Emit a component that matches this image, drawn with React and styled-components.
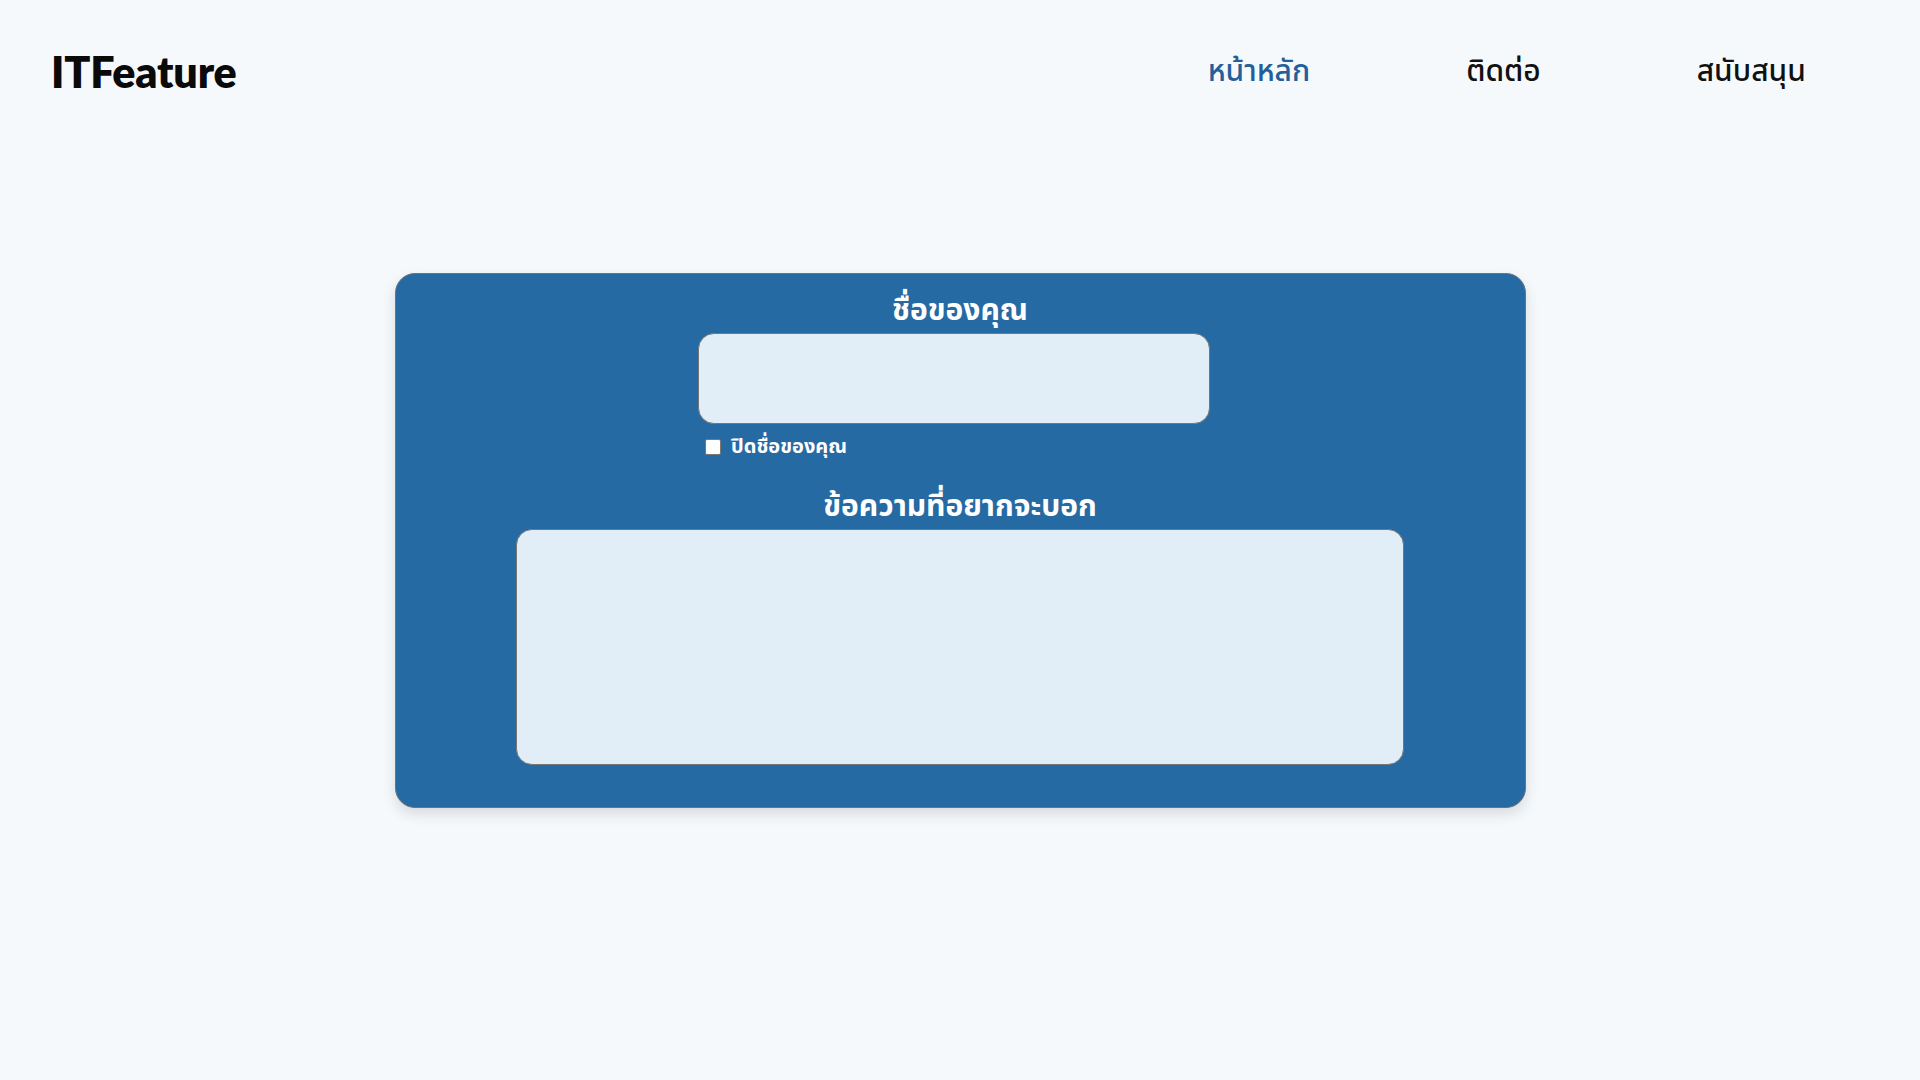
import styled, { createGlobalStyle } from "styled-components";

const GlobalStyle = createGlobalStyle`
  html, body {
    margin: 0;
    padding: 0;
    background-color: #f6f9fc;
    font-family: "Noto Sans Thai", "Noto Sans Thai UI", "Noto Sans", "Liberation Sans", sans-serif;
  }
`;

const Page = styled.div`
  width: 100%;
  min-height: 100vh;
  background-color: #f6f9fc;
`;

const Header = styled.div`
  display: flex;
  align-items: center;
  justify-content: space-between;
  height: 142px;
  padding: 0 114px 0 51px;
  box-sizing: border-box;
`;

const Logo = styled.div`
  font-family: "Lato", "Inter", sans-serif;
  font-weight: 800;
  font-size: 43px;
  color: #0a0a0a;
  letter-spacing: -0.2px;
`;

const Nav = styled.div`
  display: flex;
  gap: 156px;
  align-items: center;
  margin-top: 2px;
`;

const NavItem = styled.a`
  font-size: 30px;
  font-weight: 500;
  color: ${(p) => (p.$active ? "#245f99" : "#111")};
  text-decoration: none;
  cursor: pointer;
`;

const Main = styled.div`
  display: flex;
  justify-content: center;
  padding-top: 131px;
`;

const Card = styled.form`
  width: 1131px;
  box-sizing: border-box;
  background-color: #256aa3;
  border: 1px solid #6b7480;
  border-radius: 20px;
  box-shadow: 0 6px 14px rgba(0, 0, 0, 0.12);
  padding: 15px 0 42px;
  display: flex;
  flex-direction: column;
  align-items: center;
`;

const Label = styled.div`
  color: white;
  font-size: 30px;
  font-weight: 700;
  line-height: 44px;
`;

const NameBox = styled.div`
  display: flex;
  flex-direction: column;
  margin-left: -12px;
  margin-top: 0;
`;

const NameInput = styled.input`
  width: 512px;
  height: 91px;
  box-sizing: border-box;
  background-color: #e1eef8;
  border: 1px solid #777;
  border-radius: 16px;
  outline: none;
`;

const CheckRow = styled.label`
  display: flex;
  align-items: center;
  gap: 10px;
  margin: 8px 0 0 7px;
  color: white;
  font-size: 20px;
  font-weight: 700;
`;

const Check = styled.input`
  width: 16px;
  height: 16px;
  margin: 0;
  appearance: none;
  background: white;
  border: 1px solid #777;
  border-radius: 2px;
`;

const MessageLabel = styled(Label)`
  margin-top: 23px;
`;

const MessageInput = styled.textarea`
  width: 888px;
  height: 236px;
  box-sizing: border-box;
  background-color: #e1eef8;
  border: 1px solid #777;
  border-radius: 16px;
  resize: none;
  outline: none;
  margin-top: 0;
`;

function App() {
  return (
    <Page>
      <GlobalStyle />
      <Header>
        <Logo>ITFeature</Logo>
        <Nav>
          <NavItem $active>หน้าหลัก</NavItem>
          <NavItem>ติดต่อ</NavItem>
          <NavItem>สนับสนุน</NavItem>
        </Nav>
      </Header>
      <Main>
        <Card>
          <Label>ชื่อของคุณ</Label>
          <NameBox>
            <NameInput type="text" />
            <CheckRow>
              <Check type="checkbox" />
              ปิดชื่อของคุณ
            </CheckRow>
          </NameBox>
          <MessageLabel>ข้อความที่อยากจะบอก</MessageLabel>
          <MessageInput />
        </Card>
      </Main>
    </Page>
  );
}

export default App;
